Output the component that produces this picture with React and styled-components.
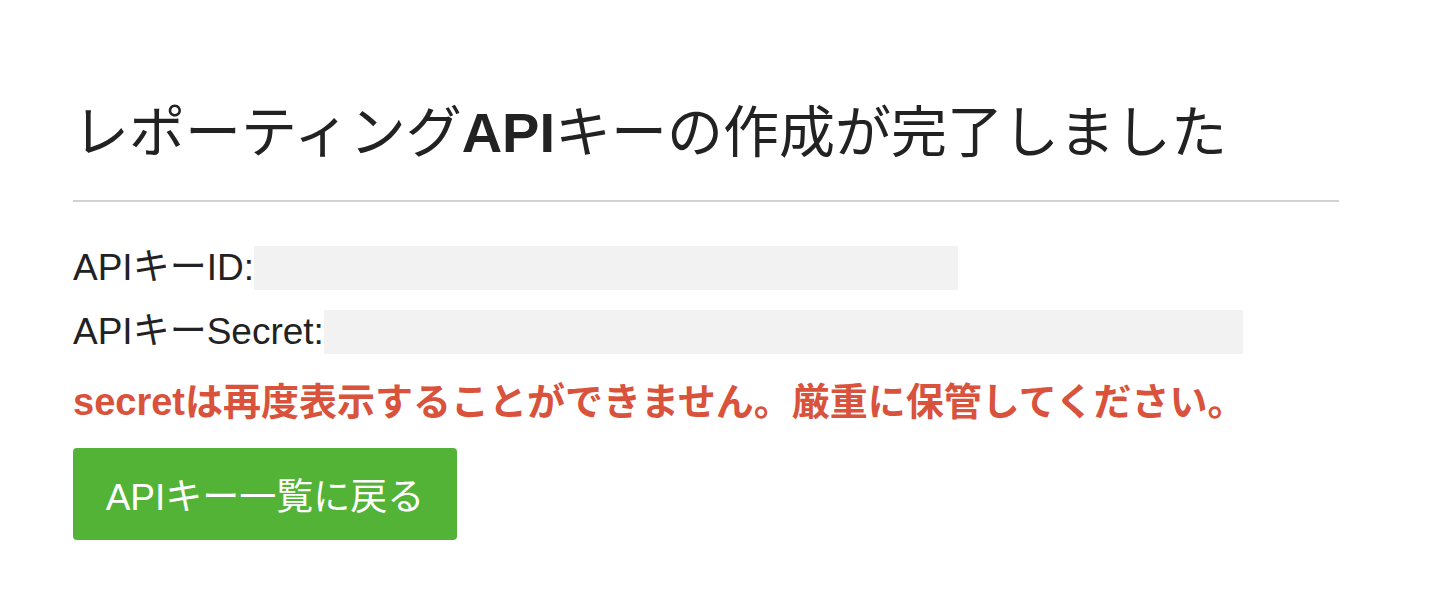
import React from 'react';
import styled, { createGlobalStyle } from 'styled-components';

const GlobalStyle = createGlobalStyle`
  body {
    margin: 0;
    background: #ffffff;
    font-family: 'Liberation Sans', 'Noto Sans CJK JP', sans-serif;
    color: #222222;
  }
`;

const Page = styled.main`
  width: 1266px;
  padding: 96px 0 0 73px;
`;

const Header = styled.header`
  border-bottom: 2px solid #d2d2d2;
  padding-bottom: 30px;
`;

const Title = styled.h1`
  margin: 0;
  font-size: 56px;
  font-weight: 400;
  line-height: 74px;
  color: #222222;

  b {
    font-weight: 700;
  }
`;

const KeyList = styled.dl`
  margin: 34px 0 0;
`;

const KeyRow = styled.div`
  font-size: 37px;
  line-height: 64px;
  height: 64px;
  display: flex;
  align-items: center;
`;

const KeyLabel = styled.dt`
  margin: 0;
`;

const KeyValue = styled.dd`
  margin: 0;
  width: ${(p) => p.$width}px;
  height: 44px;
  background: #f2f2f2;
`;

const Warning = styled.p`
  margin: 8px 0 0;
  font-size: 38px;
  font-weight: 700;
  line-height: 60px;
  color: #d9523c;
`;

const BackButton = styled.a`
  display: inline-flex;
  align-items: center;
  justify-content: center;
  margin-top: 16px;
  width: 384px;
  height: 92px;
  box-sizing: border-box;
  background: #52b336;
  border-radius: 4px;
  color: #ffffff;
  font-size: 37px;
  text-decoration: none;
`;

const keys = [
  { label: 'APIキーID:', width: 704 },
  { label: 'APIキーSecret:', width: 919 },
];

const App = () => {
  return (
    <>
      <GlobalStyle />
      <Page>
        <Header>
          <Title>
            レポーティング<b>API</b>キーの作成が完了しました
          </Title>
        </Header>

        <KeyList>
          {keys.map((k) => (
            <KeyRow key={k.label}>
              <KeyLabel>{k.label}</KeyLabel>
              <KeyValue $width={k.width} />
            </KeyRow>
          ))}
        </KeyList>

        <Warning>secretは再度表示することができません。厳重に保管してください。</Warning>

        <BackButton href="#">APIキー一覧に戻る</BackButton>
      </Page>
    </>
  );
};

export default App;
